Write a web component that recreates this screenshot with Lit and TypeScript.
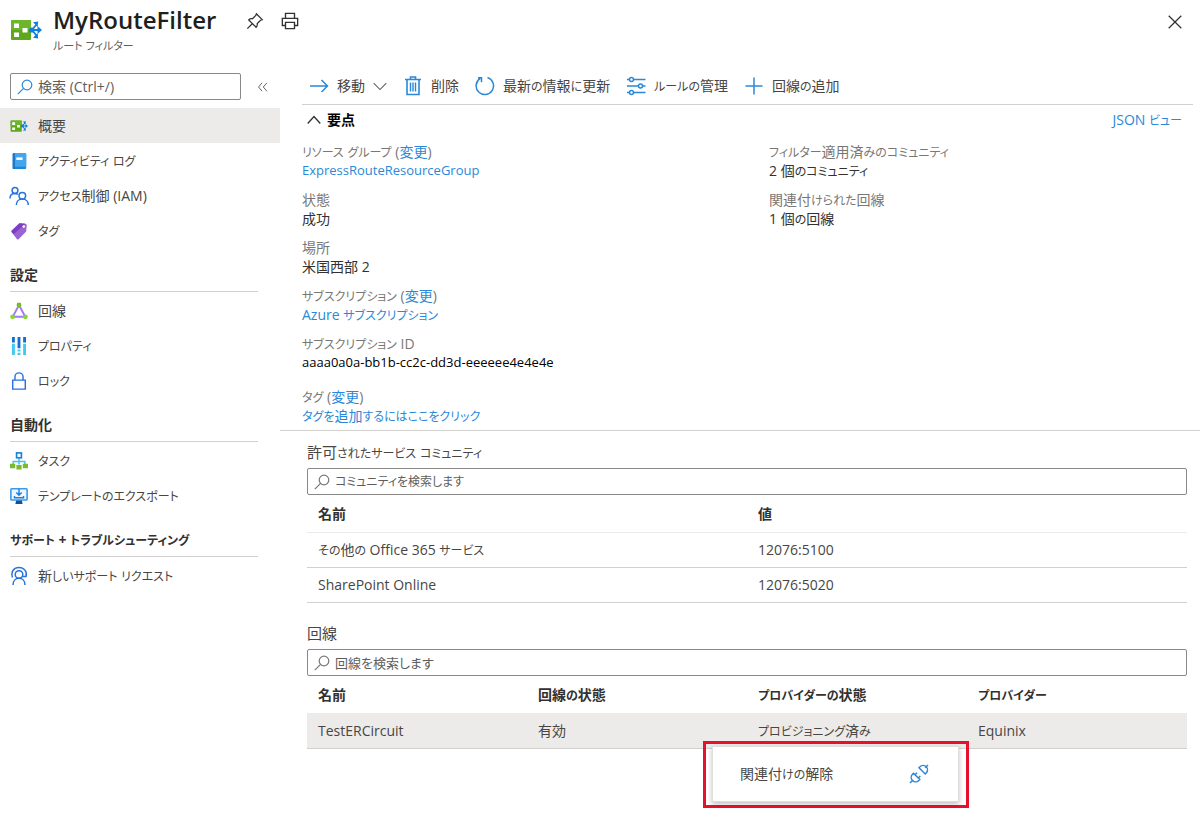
import { LitElement, html, css, svg, nothing, type TemplateResult } from "lit";
import { customElement, state } from "lit/decorators.js";

const routeFilterIcon = (size: number) => html`<svg width=${size} height=${size} viewBox="0 0 32 32" aria-hidden="true">
  <rect x="1" y="6" width="20" height="20" rx="1" fill="#5fa81e"/>
  <rect x="1" y="6" width="20" height="10" rx="1" fill="#6db52a"/>
  <path d="M4 9.500h5v4.600H4zM4 18.500h5v4.600H4zM12.500 14h5v4.600h-5z" fill="#fff"/>
  <g stroke="#0f7fdc" stroke-width="1.900" fill="none"><path d="M22 16H29M22 16L26.500 10.500M22 16L26.500 21.500"/></g>
  <path d="M27.500 12L32 16l-4.500 4zM23 8.200l5.200-.8-.6 5.600zM23 23.800l5.200.8-.6-5.600z" fill="#0f7fdc"/>
  <circle cx="21.800" cy="16" r="2.600" fill="#0f7fdc"/>
</svg>`;

const glyph = (size: number, body: TemplateResult) =>
  html`<svg width=${size} height=${size} viewBox="0 0 20 20" fill="none" aria-hidden="true">${body}</svg>`;

const BLUE = "#2b88d8";

const icons: Record<string, TemplateResult> = {
  overview: routeFilterIcon(18),
  log: glyph(18, svg`<rect x="3" y="1.500" width="15" height="17.500" rx="1.200" fill="#1f86d6"/><rect x="4.500" y="1.500" width="13.500" height="15" rx="1" fill="#42a5ee"/><path d="M3 2.500a1 1 0 0 1 1-1h1.500V19H4a1 1 0 0 1-1-1z" fill="#1f78c4"/><rect x="7" y="6" width="7" height="2.800" fill="#fff"/>`),
  iam: glyph(20, svg`<g stroke="#2672de" stroke-width="1.500"><circle cx="6" cy="4.500" r="2.900"/><circle cx="13.300" cy="9.800" r="3.300"/><path d="M1 12.500c0-3 2-5 4.800-5 1.200 0 2.200.3 3 1M7.300 19c0-3.500 2.500-5.900 6-5.900s6 2.400 6 5.900"/></g>`),
  tag: glyph(18, svg`<path d="M2 9.500L10.500 1.500 17 2q1.500.2 1.600 1.700L18 10.500l-8.500 8.700q-1 .8-1.900-.2L2 11.500q-.8-1 0-2z" fill="#9a62d2"/><path d="M2 9.500L10.500 1.500 17 2 4 13.500l-2-2q-.8-1 0-2z" fill="#7a3fc4"/><circle cx="15.300" cy="5" r="1.400" fill="#fff"/>`),
  circuit: glyph(18, svg`<path d="M10 3.500L3 16.500H17Z" stroke="#a67af4" stroke-width="2.200"/><circle cx="10" cy="3.300" r="2.700" fill="#76bc2d"/><circle cx="2.900" cy="16.500" r="2.700" fill="#86d633"/><circle cx="17.100" cy="16.500" r="2.700" fill="#86d633"/>`),
  props: glyph(18, svg`<path d="M2.200 0H5.400V6H2.200zM8.400 0h3.200v12.500H8.400zM14.600 0h3.200v6h-3.200z" fill="#1271cc"/><path d="M2.200 7.500H5.400V20H2.200zM8.400 14h3.200v2.200H8.400zM8.400 17.500h3.200V20H8.400zM14.600 7.500h3.200V20h-3.200z" fill="#3fcbf0"/>`),
  lock: glyph(18, svg`<path d="M3 9h14v10H3zM5.500 9V5.500a4.500 4.500 0 0 1 9 0V9" stroke="#2672de" stroke-width="1.600"/>`),
  task: glyph(18, svg`<path d="M10 6v8M3.500 14V10.500h13V14" stroke="#40c4ee" stroke-width="1.600"/><rect x="7.300" y="1" width="5.400" height="5.400" stroke="#1d7fd8" stroke-width="1.800"/><path d="M0 13h5.800v5H0zM7.100 14.500h5.800v5H7.100zM14.200 13H20v5h-5.800z" fill="#76bc2d"/>`),
  exportTemplate: glyph(18, svg`<path d="M7 14h6l1 5H6z" fill="#174f9c"/><rect x="1" y="2" width="18" height="12.500" rx=".8" fill="#eef7ff" stroke="#3a9be8" stroke-width="1.800"/><path d="M10 2v6.500M7 6.200l3 3 3-3M5 10v2h10v-2" stroke="#1d7fd8" stroke-width="1.600"/>`),
  support: glyph(20, svg`<g stroke="#2672de" stroke-width="1.500"><path d="M3.500 11.500C1.500 5.500 5 1.500 10 1.500s8.500 4 7 9h-3.500"/><circle cx="10" cy="8.500" r="3.800"/><path d="M4 19c0-4 2.400-6.700 6-6.700s6 2.700 6 6.700"/></g>`),
  move: glyph(20, svg`<path d="M1 10h17.500M12.500 4l6 6-6 6" stroke=${BLUE} stroke-width="1.500"/>`),
  trash: glyph(20, svg`<path d="M2 3.500h16M7.500 3.500V1h5v2.500M4 3.500V18.500H16V3.500" stroke=${BLUE} stroke-width="1.600"/><path d="M7.500 6.500v9M10 6.500v9M12.500 6.500v9" stroke=${BLUE} stroke-width="1.400"/>`),
  refresh: glyph(20, svg`<path d="M12.500 1.500a8.700 8.700 0 1 1-7.300.9M3 1.700h3.500v4.500" stroke=${BLUE} stroke-width="1.500"/>`),
  rules: glyph(20, svg`<g stroke=${BLUE} stroke-width="1.500"><path d="M1 3.500h2.500M7.500 3.500h12M1 10h11.500M16.500 10h3M1 16.500h2.500M7.500 16.500h12"/><circle cx="5.500" cy="3.500" r="2"/><circle cx="14.500" cy="10" r="2"/><circle cx="5.500" cy="16.500" r="2"/></g>`),
  plus: glyph(20, svg`<path d="M10 1.500v17M1.500 10h17" stroke=${BLUE} stroke-width="1.500"/>`),
  chevronDown: glyph(14, svg`<path d="M1 6l9 9 9-9" stroke="#605e5c" stroke-width="1.500"/>`),
  chevronUp: glyph(14, svg`<path d="M1 15l9-10 9 10" stroke="#323130" stroke-width="1.900"/>`),
  collapse: glyph(12, svg`<path d="M8.500 3l-6 7 6 7M16.500 3l-6 7 6 7" stroke="#605e5c" stroke-width="1.600"/>`),
  pin: glyph(18, svg`<path d="M1.500 18.500l6-6M11.500 2l6.500 6.500-1.800.6-3.700 3.700c.3 1.800-.2 3.200-1.300 4.200L3 8.800c1-1.100 2.400-1.600 4.200-1.300l3.700-3.700z" stroke="#323130" stroke-width="1.400"/>`),
  print: glyph(18, svg`<path d="M5 7V1.500h10V7M5 15H1.500V7h17v8H15M5 11.500h10v7H5z" stroke="#323130" stroke-width="1.500"/>`),
  close: glyph(14, svg`<path d="M1 1l18 18M19 1L1 19" stroke="#323130" stroke-width="1.800"/>`),
  search: glyph(16, svg`<circle cx="12.500" cy="7.500" r="6" stroke="currentColor" stroke-width="1.500"/><path d="M8.200 11.800L1 19" stroke="currentColor" stroke-width="1.500"/>`),
  unlink: glyph(20, svg`<g stroke=${BLUE} stroke-width="1.500"><path d="M1 19l2.800-2.800M16.200 3.800L19 1"/><path d="M4.500 9.200l6.300 6.300-1 1a4.400 4.400 0 0 1-6.300-6.300zM6 10.700l2-2M9.300 14l2-2"/><path d="M10 3.800l6.200 6.200 1-1a4.200 4.200 0 0 0-6.200-6.200z"/></g>`),
};

/** Sets runs of kana one step smaller than the kanji around them. */
const ja = (text: string) =>
  text.split(/([\u3040-\u30ff]+)/).map((run, i) => (i % 2 ? html`<span class="kana">${run}</span>` : run));

interface NavGroup { title?: string; items: { icon: string; label: string; active?: boolean }[] }

const NAV: NavGroup[] = [
  { items: [
    { icon: "overview", label: "概要", active: true },
    { icon: "log", label: "アクティビティ ログ" },
    { icon: "iam", label: "アクセス制御 (IAM)" },
    { icon: "tag", label: "タグ" },
  ] },
  { title: "設定", items: [
    { icon: "circuit", label: "回線" },
    { icon: "props", label: "プロパティ" },
    { icon: "lock", label: "ロック" },
  ] },
  { title: "自動化", items: [
    { icon: "task", label: "タスク" },
    { icon: "exportTemplate", label: "テンプレートのエクスポート" },
  ] },
  { title: "サポート + トラブルシューティング", items: [{ icon: "support", label: "新しいサポート リクエスト" }] },
];

const COMMANDS = [
  { icon: "move", label: "移動", menu: true },
  { icon: "trash", label: "削除" },
  { icon: "refresh", label: "最新の情報に更新" },
  { icon: "rules", label: "ルールの管理" },
  { icon: "plus", label: "回線の追加" },
];

interface Fact { label: string; value: string; change?: boolean; link?: boolean; kind?: string }

const FACTS: Fact[][] = [
  [
    { label: "リソース グループ", value: "ExpressRouteResourceGroup", change: true, link: true, kind: "resource" },
    { label: "状態", value: "成功" },
    { label: "場所", value: "米国西部 2" },
    { label: "サブスクリプション", value: "Azure サブスクリプション", change: true, link: true },
    { label: "サブスクリプション ID", value: "aaaa0a0a-bb1b-cc2c-dd3d-eeeeee4e4e4e", kind: "id" },
    { label: "タグ", value: "タグを追加するにはここをクリック", change: true, link: true, kind: "tags" },
  ],
  [
    { label: "フィルター適用済みのコミュニティ", value: "2 個のコミュニティ" },
    { label: "関連付けられた回線", value: "1 個の回線" },
  ],
];

@customElement("app-root")
export class AppRoot extends LitElement {
  @state() private expanded = true;

  static styles = css`
    :host {
      display: block;
      min-height: 100vh;
      background: #fff;
      color: #484644;
      font-family: "Open Sans", "Noto Sans CJK JP", sans-serif;
      font-size: 14px;
      line-height: 20px;
      font-feature-settings: "palt";
    }
    * { box-sizing: border-box; }
    svg { display: block; flex: none; }
    a { color: #2b88d8; text-decoration: none; }
    a:hover { text-decoration: underline; }
    h1, h2, p, ul, dl, dd { margin: 0; padding: 0; }
    ul { list-style: none; }
    button {
      display: flex;
      align-items: center;
      padding: 0;
      border: 0;
      background: none;
      color: inherit;
      font: inherit;
      font-feature-settings: inherit;
      cursor: pointer;
    }
    .kana { font-size: 12px; line-height: 1; }
    .header {
      display: flex;
      align-items: flex-start;
      height: 65px;
      padding: 4px 18px 0 10px;
    }
    .emblem { padding-top: 10px; }
    .titles { padding-left: 11px; }
    h1 { color: #201f1e; font-size: 24px; line-height: 32px; font-weight: 600; }
    .kind { padding-top: 1px; color: #605e5c; font-size: 11px; line-height: 18px; }
    .actions { display: flex; gap: 17px; padding: 8px 0 0 30px; }
    .close { margin-left: auto; padding-top: 11px; }
    .body { display: grid; grid-template-columns: 280px minmax(0, 1fr); }

    .find { display: flex; align-items: center; gap: 16px; padding: 8px 0 8px 10px; }
    .find .search { width: 231px; }
    .find .search svg { color: #2b88d8; }
    .find input { font-size: 14px; }
    .search {
      display: flex;
      align-items: center;
      gap: 5px;
      height: 27px;
      padding: 0 6px;
      border: 1px solid #8a8886;
      border-radius: 2px;
      color: #797775;
    }
    .search input {
      flex: 1;
      min-width: 0;
      padding: 0;
      border: 0;
      outline: 0;
      background: none;
      color: #323130;
      font: inherit;
      font-size: 13px;
      font-feature-settings: inherit;
    }
    .find .search input { font-size: 14px; }
    .search .dense { font-size: 12px; }
    .search input::placeholder { color: #605e5c; opacity: 1; }
    .nav-title {
      margin: 15px 22px 1px 10px;
      padding-bottom: 4px;
      border-bottom: 1px solid #d2d0ce;
      color: #323130;
      font-size: 14px;
      line-height: 24px;
      font-weight: 700;
    }
    .nav-item {
      display: block;
      padding-left: 9px;
      color: inherit;
    }
    .nav-item.active { background: #edebe9; }
    .nav-row { display: flex; align-items: center; gap: 9px; height: 35px; }
    .nav-icon { display: grid; place-items: center; width: 20px; }

    .top { padding: 0 7px 0 22px; }
    .toolbar {
      display: flex;
      gap: 16px;
      height: 40px;
      padding: 3px 0 0 7px;
      border-bottom: 1px solid #d2d0ce;
    }
    .toolbar button { gap: 8px; }
    .summary { display: flex; justify-content: space-between; align-items: center; height: 30px; padding: 0 11px 0 5px; }
    .summary button { gap: 6px; color: #000; font-weight: 700; }
    .facts { display: grid; grid-template-columns: 467px minmax(0, 1fr); padding: 7px 0 5px; }
    dl { display: flex; flex-direction: column; gap: 10px; line-height: 19px; }
    dt { color: #797775; }
    dd { color: #323130; }
    .resource dd, .id dd { font-size: 13px; }
    .id dd { color: #000; }
    .tags { padding-top: 5px; }

    .lists { padding: 11px 13px 0 27px; border-top: 1px solid #d2d0ce; }
    .list { position: relative; margin-bottom: 20px; }
    h2 { margin-bottom: 6px; font-size: 15px; font-weight: 400; }
    table { width: 100%; border-collapse: separate; border-spacing: 0; table-layout: fixed; }
    th, td { padding: 0 0 0 11px; text-align: left; }
    th { height: 38px; color: #323130; font-weight: 700; border-bottom: 1px solid #edebe9; }
    td { height: 35px; border-bottom: 1px solid #d2d0ce; }
    .selected td { background: #edebe9; }

    .callout {
      position: absolute;
      top: calc(100% - 8px);
      left: 45%;
      width: 266px;
      padding: 2px 7px 3px 6px;
      border: 3px solid #e8112d;
    }
    .menu { background: #fff; border: 1px solid #e1dfdd; box-shadow: 0 2px 5px rgba(0, 0, 0, 0.25); }
    .menu button { justify-content: space-between; width: 100%; height: 54px; padding: 0 29px 0 27px; }
  `;

  private fact(f: Fact) {
    return html`<div class=${f.kind ?? ""}>
      <dt>${ja(f.label)}${f.change ? html` (<a href="#">変更</a>)` : nothing}</dt>
      <dd>${f.link ? html`<a href="#">${ja(f.value)}</a>` : ja(f.value)}</dd>
    </div>`;
  }

  private table(heads: string[], rows: string[][], selected = false) {
    return html`<table>
      <thead><tr>${heads.map((h) => html`<th scope="col">${ja(h)}</th>`)}</tr></thead>
      <tbody>${rows.map((r) => html`<tr class=${selected ? "selected" : ""}>${r.map((c) => html`<td>${ja(c)}</td>`)}</tr>`)}</tbody>
    </table>`;
  }

  render() {
    return html`
      <header class="header">
        <div class="emblem">${routeFilterIcon(32)}</div>
        <div class="titles">
          <h1>MyRouteFilter</h1>
          <p class="kind">ルート フィルター</p>
        </div>
        <div class="actions">
          <button aria-label="ピン留め">${icons.pin}</button>
          <button aria-label="印刷">${icons.print}</button>
        </div>
        <button class="close" aria-label="閉じる">${icons.close}</button>
      </header>
      <div class="body">
        <aside>
          <div class="find">
            <label class="search">${icons.search}<input type="text" aria-label="検索" placeholder="検索 (Ctrl+/)"></label>
            <button class="collapse" aria-label="折りたたむ">${icons.collapse}</button>
          </div>
          <nav>
            ${NAV.map((g) => html`
              ${g.title ? html`<h2 class="nav-title">${ja(g.title)}</h2>` : nothing}
              <ul>${g.items.map((i) => html`<li>
                <a class="nav-item ${i.active ? "active" : ""}" href="#"><div class="nav-row"><span class="nav-icon">${icons[i.icon]}</span><span>${ja(i.label)}</span></div></a>
              </li>`)}</ul>`)}
          </nav>
        </aside>
        <main>
          <div class="top">
            <div class="toolbar">
              ${COMMANDS.map((c) => html`<button>${icons[c.icon]}<span>${ja(c.label)}</span>${c.menu ? icons.chevronDown : nothing}</button>`)}
            </div>
            <div class="summary">
              <button aria-expanded=${this.expanded} @click=${() => (this.expanded = !this.expanded)}>${icons.chevronUp}要点</button>
              <a href="#">${ja("JSON ビュー")}</a>
            </div>
            ${this.expanded ? html`<div class="facts">${FACTS.map((col) => html`<dl>${col.map((f) => this.fact(f))}</dl>`)}</div>` : nothing}
          </div>
          <div class="lists">
            <section class="list">
              <h2><label for="communities">${ja("許可されたサービス コミュニティ")}</label></h2>
              <div class="search">${icons.search}<input id="communities" class="dense" type="text" placeholder="コミュニティを検索します"></div>
              ${this.table(["名前", "値"], [["その他の Office 365 サービス", "12076:5100"], ["SharePoint Online", "12076:5020"]])}
            </section>
            <section class="list">
              <h2><label for="circuits">回線</label></h2>
              <div class="search">${icons.search}<input id="circuits" type="text" placeholder="回線を検索します"></div>
              ${this.table(["名前", "回線の状態", "プロバイダーの状態", "プロバイダー"], [["TestERCircuit", "有効", "プロビジョニング済み", "Equinix"]], true)}
              <div class="callout"><div class="menu"><button><span>${ja("関連付けの解除")}</span>${icons.unlink}</button></div></div>
            </section>
          </div>
        </main>
      </div>`;
  }
}
